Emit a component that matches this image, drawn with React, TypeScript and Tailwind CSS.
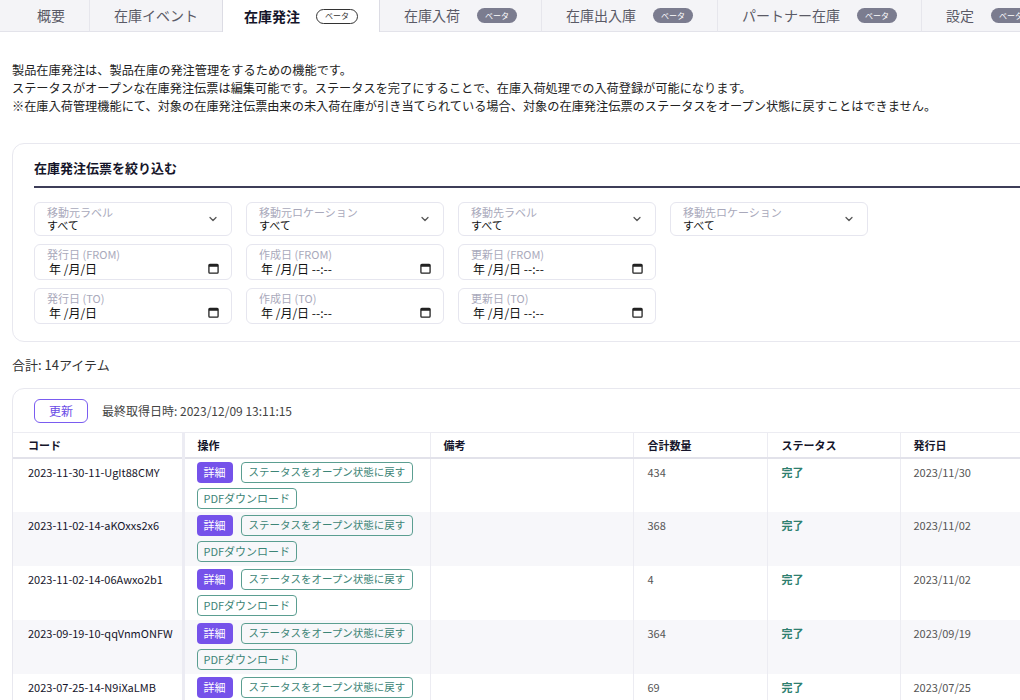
const tabs = [
  { label: "概要", beta: false, active: false },
  { label: "在庫イベント", beta: false, active: false },
  { label: "在庫発注", beta: true, active: true },
  { label: "在庫入荷", beta: true, active: false },
  { label: "在庫出入庫", beta: true, active: false },
  { label: "パートナー在庫", beta: true, active: false },
  { label: "設定", beta: true, active: false },
];

const rows = [
  { code: "2023-11-30-11-UgIt88CMY", qty: "434", date: "2023/11/30" },
  { code: "2023-11-02-14-aKOxxs2x6", qty: "368", date: "2023/11/02" },
  { code: "2023-11-02-14-06Awxo2b1", qty: "4", date: "2023/11/02" },
  { code: "2023-09-19-10-qqVnmONFW", qty: "364", date: "2023/09/19" },
  { code: "2023-07-25-14-N9iXaLMB", qty: "69", date: "2023/07/25" },
];

function Chevron() {
  return (
    <svg width="12" height="12" viewBox="0 0 24 24" fill="none" stroke="#555" strokeWidth="2.5" strokeLinecap="round" strokeLinejoin="round">
      <path d="M6 9l6 6 6-6" />
    </svg>
  );
}

function CalendarIcon() {
  return (
    <svg width="11" height="11" viewBox="0 0 12 12">
      <rect x="1" y="1.5" width="10" height="9.5" rx="1" fill="none" stroke="#222" strokeWidth="1.4" />
      <rect x="1" y="1.5" width="10" height="2.6" fill="#222" />
    </svg>
  );
}

function SelectField({ label }: { label: string }) {
  return (
    <div className="h-[34px] border border-[#e6e6ef] rounded-md pl-3 pr-3 flex items-center justify-between">
      <div className="flex flex-col">
        <span className="text-[11px] leading-[13px] text-[#a9a9bb]">{label}</span>
        <span className="text-[11px] leading-[13px] text-[#111]">すべて</span>
      </div>
      <Chevron />
    </div>
  );
}

function DateField({ label, time }: { label: string; time?: boolean }) {
  return (
    <div className="h-[36px] border border-[#e6e6ef] rounded-md pl-3 pr-3 flex items-center justify-between">
      <div className="flex flex-col">
        <span className="text-[11px] leading-[13px] text-[#a9a9bb]">{label}</span>
        <span className="text-[12px] leading-[15px] text-[#111] pl-[2px]">
          年 /月/日{time ? " --:--" : ""}
        </span>
      </div>
      <div className="mt-[12px]">
        <CalendarIcon />
      </div>
    </div>
  );
}

export default function App() {
  return (
    <div
      className="w-[1020px] h-[700px] overflow-hidden bg-white text-[#222]"
      style={{ fontFamily: '"Noto Sans CJK JP", "Noto Sans", sans-serif' }}
    >
      {/* TABS */}
      <div className="flex h-[32px] bg-[#f4f4f7] w-[1100px]">
        <div className="w-[13px] border-b border-[#e3e3ea]" />
        {tabs.map((t, i) => (
          <div
            key={t.label}
            className={
              t.active
                ? "flex items-center gap-[16px] px-[21px] bg-white border-x border-[#dcdce4] text-[14px] font-bold text-[#15152a]"
                : "flex items-center gap-[17px] px-[24px] border-b border-[#e3e3ea] text-[14px] text-[#5a5a66]" +
                  (i > 0 && !tabs[i - 1].active ? " border-l border-l-[#e6e6ec]" : "")
            }
          >
            <span>{t.label}</span>
            {t.beta &&
              (t.active ? (
                <span className="h-[15px] w-[42px] rounded-full border border-[#333] text-[8px] font-normal text-[#333] flex items-center justify-center">
                  ベータ
                </span>
              ) : (
                <span className="h-[15px] w-[40px] rounded-full bg-[#7b7c8f] text-[8px] text-white flex items-center justify-center">
                  ベータ
                </span>
              ))}
          </div>
        ))}
        <div className="flex-1 border-b border-[#e3e3ea]" />
      </div>

      {/* DESCRIPTION */}
      <div className="px-[12px] pt-[29px] text-[12.2px] leading-[18px] text-[#222]">
        <p>製品在庫発注は、製品在庫の発注管理をするための機能です。</p>
        <p>ステータスがオープンな在庫発注伝票は編集可能です。ステータスを完了にすることで、在庫入荷処理での入荷登録が可能になります。</p>
        <p>※在庫入荷管理機能にて、対象の在庫発注伝票由来の未入荷在庫が引き当てられている場合、対象の在庫発注伝票のステータスをオープン状態に戻すことはできません。</p>
      </div>

      {/* FILTER */}
      <div className="ml-[12px] mt-[28px] w-[1100px] border border-[#e8e8ef] rounded-xl px-[21px] pt-[14px] pb-[17px]">
        <h2 className="text-[13px] font-bold text-[#15152a] leading-[20px]">在庫発注伝票を絞り込む</h2>
        <div className="mt-[8px] h-[2px] bg-[#3d3d58]" />
        <div className="mt-[14px] grid grid-cols-[198px_198px_198px_198px] gap-x-[14px] gap-y-[8px]">
          <SelectField label="移動元ラベル" />
          <SelectField label="移動元ロケーション" />
          <SelectField label="移動先ラベル" />
          <SelectField label="移動先ロケーション" />
          <DateField label="発行日 (FROM)" />
          <DateField label="作成日 (FROM)" time />
          <DateField label="更新日 (FROM)" time />
          <div />
          <DateField label="発行日 (TO)" />
          <DateField label="作成日 (TO)" time />
          <DateField label="更新日 (TO)" time />
        </div>
      </div>

      {/* TOTAL */}
      <div className="px-[12px] mt-[14px] text-[13px] text-[#333] leading-[18px]">合計: 14アイテム</div>

      {/* TABLE */}
      <div className="ml-[12px] mt-[14px] w-[1100px] border border-[#e8e8ef] rounded-xl">
        <div className="flex items-center gap-[14px] pl-[21px] pt-[10px] pb-[9px]">
          <button className="h-[24px] w-[54px] border border-[#7a5cf0] rounded-md text-[12px] text-[#6a4be6]">更新</button>
          <span className="text-[12px] text-[#444]">最終取得日時: 2023/12/09 13:11:15</span>
        </div>
        <table className="w-full border-collapse text-[11px]">
          <thead>
            <tr className="h-[25px] border-t border-[#ececf2] border-b-2 border-b-[#e2e2ea] text-left text-[#15152a] font-bold">
              <th className="w-[170px] pl-[15px] border-r-[3px] border-r-[#ececf3]">コード</th>
              <th className="w-[247px] pl-[13px] border-r border-r-[#ececf2]">操作</th>
              <th className="w-[203px] pl-[13px] border-r border-r-[#ececf2]">備考</th>
              <th className="w-[134px] pl-[14px] border-r border-r-[#ececf2]">合計数量</th>
              <th className="w-[133px] pl-[14px] border-r border-r-[#ececf2]">ステータス</th>
              <th className="pl-[13px]">発行日</th>
            </tr>
          </thead>
          <tbody>
            {rows.map((r, i) => (
              <tr key={r.code} className={i % 2 === 1 ? "bg-[#f7f7fa] align-top" : "bg-white align-top"}>
                <td className="h-[54px] pl-[15px] pt-[5px] text-[#15152a] border-r-[3px] border-r-[#ececf3]">{r.code}</td>
                <td className="pl-[12px] pt-[3px] border-r border-r-[#ececf2]">
                  <div className="flex flex-col items-start gap-[5px]">
                    <div className="flex gap-[8px] whitespace-nowrap">
                      <span className="h-[21px] px-[7px] rounded bg-[#7552ea] text-white flex items-center">詳細</span>
                      <span className="h-[21px] px-[7px] rounded border border-[#5b9e91] text-[#3d8577] text-[10.5px] flex items-center">ステータスをオープン状態に戻す</span>
                    </div>
                    <span className="h-[21px] px-[6px] rounded border border-[#5b9e91] text-[#3d8577] flex items-center whitespace-nowrap">PDFダウンロード</span>
                  </div>
                </td>
                <td className="border-r border-r-[#ececf2]" />
                <td className="pl-[14px] pt-[5px] text-[#555] border-r border-r-[#ececf2]">{r.qty}</td>
                <td className="pl-[14px] pt-[5px] font-bold text-[#2f7f6f] border-r border-r-[#ececf2]">完了</td>
                <td className="pl-[13px] pt-[5px] text-[#555]">{r.date}</td>
              </tr>
            ))}
          </tbody>
        </table>
      </div>
    </div>
  );
}
